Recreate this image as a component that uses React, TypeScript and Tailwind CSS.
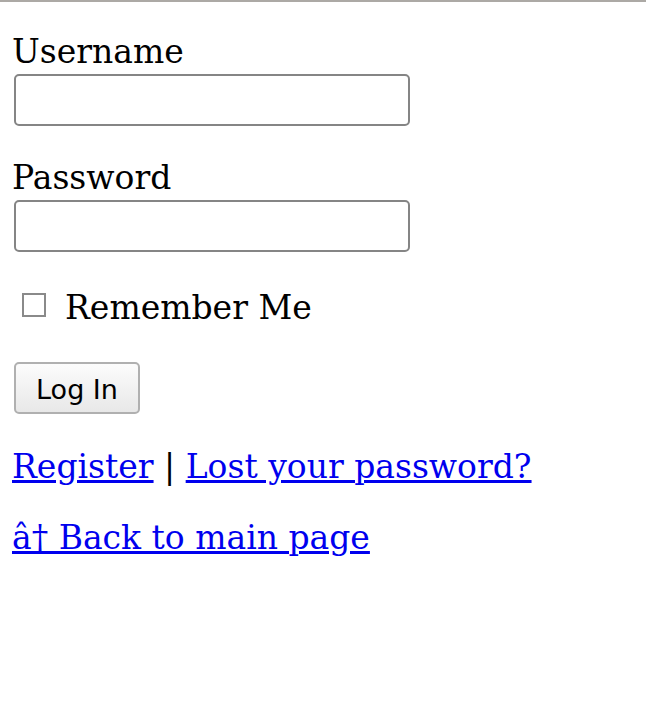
export default function App() {
  return (
    <div className="min-h-[704px] bg-white border-t-2 border-[#aca9a5] px-[12px] pt-[31px] font-['DejaVu_Serif',serif] text-[33px] text-black">
      <form className="flex flex-col items-start">
        <label className="leading-[38px]">Username</label>
        <input
          type="text"
          className="mt-[3px] ml-[2px] w-[396px] h-[52px] rounded-[5px] border-2 border-[#858585] bg-white"
        />
        <label className="mt-[33px] leading-[38px]">Password</label>
        <input
          type="password"
          className="mt-[3px] ml-[2px] w-[396px] h-[52px] rounded-[5px] border-2 border-[#858585] bg-white"
        />
        <div className="mt-[37px] flex items-start">
          <span className="mt-[4px] ml-[10px] w-[24px] h-[24px] border-2 border-[#8a8a8a] bg-white" />
          <span className="ml-[19px] leading-[38px]">Remember Me</span>
        </div>
        <button
          type="button"
          className="mt-[35px] ml-[2px] w-[126px] h-[52px] pt-[3px] rounded-[5px] border-2 border-[#b0b0b0] bg-gradient-to-b from-[#fcfcfc] to-[#e8e8e8] font-['DejaVu_Sans',sans-serif] text-[27px] leading-none"
        >
          Log In
        </button>
        <p className="mt-[34px] leading-[38px]">
          <a href="#" className="text-[#0000ee] underline">Register</a> |{" "}
          <a href="#" className="text-[#0000ee] underline">Lost your password?</a>
        </p>
        <p className="mt-[33px] leading-[38px]">
          <a href="#" className="text-[#0000ee] underline">â† Back to main page</a>
        </p>
      </form>
    </div>
  );
}
